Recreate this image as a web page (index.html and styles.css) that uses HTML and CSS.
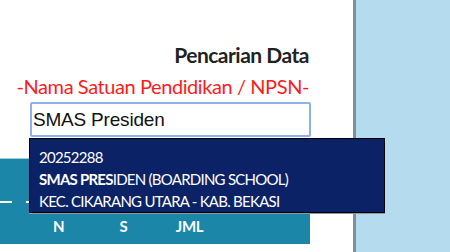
FILE: index.html
```html
<!DOCTYPE html>
<html>
<head>
<meta charset="utf-8">
<link rel="stylesheet" href="styles.css">
</head>
<body>
<div class="page">
  <div class="panel">
    <div class="search">
      <div class="title">Pencarian Data</div>
      <div class="label">-Nama Satuan Pendidikan / NPSN-</div>
      <div class="input">SMAS Presiden</div>
    </div>
    <div class="table-head">
      <div class="dash-row"><span class="dash"></span><span class="dash"></span></div>
      <div class="cols"><span class="c-n">N</span><span class="c-s">S</span><span class="c-j">JML</span></div>
    </div>
    <div class="menu">
      <div class="item">
        <div class="line">20252288</div>
        <div class="line"><b>SMAS PRES</b>IDEN (BOARDING SCHOOL)</div>
        <div class="line">KEC. CIKARANG UTARA - KAB. BEKASI</div>
      </div>
    </div>
  </div>
  <div class="divider"></div>
  <div class="side"></div>
</div>
</body>
</html>
```
FILE: styles.css
```css
html, body { margin: 0; padding: 0; }
body { width: 450px; height: 252px; overflow: hidden; font-family: Lato, "Open Sans", sans-serif; }
.page { display: flex; height: 252px; }
.panel { position: relative; width: 353px; background: #fff; }
.divider { width: 3px; background: #7f929b; }
.side { flex: 1; background: #b4dcee; }
.search { width: 311px; display: flex; flex-direction: column; align-items: flex-end; padding-top: 42px; }
.title { font-weight: bold; font-size: 21px; line-height: 26px; color: #222; padding-right: 2px; letter-spacing: -0.5px; }
.label { font-size: 20px; line-height: 26px; color: #ff1a1a; padding-right: 2px; margin-top: 5px; letter-spacing: -0.42px; }
.input { box-sizing: border-box; width: 281px; height: 35px; margin-top: 3px; border: 2px solid #8fb0f0; border-radius: 2px; font-family: "Liberation Sans", Arial, sans-serif; font-size: 19px; line-height: 31px; padding-left: 1px; color: #111; letter-spacing: -0.2px; }
.table-head { width: 310px; height: 86px; margin-top: 21px; background: #1b86a8; border-top: 1px solid #9fd0e0; box-sizing: border-box; color: #fff; }
.dash-row { display: flex; gap: 14px; padding-top: 42px; height: 2px; }
.dash { width: 12px; height: 2px; background: #fff; }
.cols { display: flex; padding-top: 14px; font-weight: bold; font-size: 15px; line-height: 18px; }
.c-n { margin-left: 53px; }
.c-s { margin-left: 55px; }
.c-j { margin-left: 48px; letter-spacing: -0.3px; }
.menu { position: absolute; left: 29px; top: 138px; width: 356px; height: 75px; box-sizing: border-box; background: #0c2267; border: 1px solid #000; box-shadow: 0 1px 0 #8a9aa8; }
.item { padding: 7px 0 0 9px; color: #fff; font-size: 15px; line-height: 22px; letter-spacing: -0.75px; }
.line { white-space: nowrap; }
.line b { font-weight: bold; }
```
